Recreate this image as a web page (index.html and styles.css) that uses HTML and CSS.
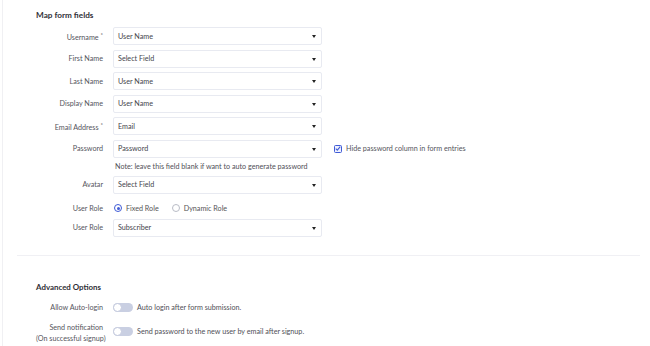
FILE: index.html
```html
<!DOCTYPE html>
<html lang="en">
  <head>
    <meta charset="UTF-8" />
    <title>Map form fields</title>
    <link rel="stylesheet" href="styles.css">
  </head>
  <body>
    <div class="panel">
      <div class="section">
        <div class="heading">Map form fields</div>
        <div class="rows">
          <div class="row">
            <div class="label">Username <span class="req">*</span></div>
            <div class="select">User Name</div>
          </div>
          <div class="row">
            <div class="label">First Name</div>
            <div class="select">Select Field</div>
          </div>
          <div class="row">
            <div class="label">Last Name</div>
            <div class="select">User Name</div>
          </div>
          <div class="row">
            <div class="label">Display Name</div>
            <div class="select">User Name</div>
          </div>
          <div class="row">
            <div class="label">Email Address <span class="req">*</span></div>
            <div class="select">Email</div>
          </div>
          <div class="row">
            <div class="label">Password</div>
            <div class="select">Password</div>
            <div class="check">
              <span class="box">
                <svg width="7" height="7" viewBox="0 0 8 8"><path d="M1 4.2 3.1 6.2 7 1.6" fill="none" stroke="#3f5bd6" stroke-width="1.4"/></svg>
              </span>
              <span>Hide password column in form entries</span>
            </div>
          </div>
          <div class="row note-row">
            <div class="label"></div>
            <div class="note">Note: leave this field blank if want to auto generate password</div>
          </div>
          <div class="row">
            <div class="label">Avatar</div>
            <div class="select">Select Field</div>
          </div>
          <div class="row radio-row">
            <div class="label">User Role</div>
            <div class="radios">
              <span class="radio on"></span><span class="radio-text">Fixed Role</span>
              <span class="radio"></span><span class="radio-text">Dynamic Role</span>
            </div>
          </div>
          <div class="row">
            <div class="label">User Role</div>
            <div class="select">Subscriber</div>
          </div>
        </div>
      </div>

      <div class="divider"></div>

      <div class="section advanced">
        <div class="heading">Advanced Options</div>
        <div class="toggles">
          <div class="row toggle-row">
            <div class="label">Allow Auto-login</div>
            <span class="toggle"></span>
            <span class="toggle-text">Auto login after form submission.</span>
          </div>
          <div class="row toggle-row tall">
            <div class="label">Send notification<br />(On successful signup)</div>
            <span class="toggle"></span>
            <span class="toggle-text">Send password to the new user by email after signup.</span>
          </div>
        </div>
      </div>
    </div>
  </body>
</html>
```

FILE: styles.css
```css
body {
  margin: 0;
  padding: 0;
  background: #fff;
  font-family: Lato, "Open Sans", sans-serif;
  font-size: 7.2px;
  color: #555;
}
.panel {
  margin-left: 2px;
  border-left: 1px solid #f0f0f3;
  height: 346px;
  overflow: hidden;
}
.section {
  padding-left: 33px;
}
.heading {
  font-size: 8.2px;
  font-weight: 700;
  color: #2f2f36;
  padding-top: 10px;
  height: 17px;
}
.rows {
  display: flex;
  flex-direction: column;
  gap: 4.5px;
}
.row {
  display: flex;
  align-items: center;
  height: 18px;
}
.label {
  width: 67px;
  flex-shrink: 0;
  margin-right: 10px;
  text-align: right;
  white-space: nowrap;
  color: #55555d;
  line-height: 11px;
}
.req {
  font-size: 6px;
  vertical-align: 3px;
  color: #444;
}
.select {
  width: 209px;
  height: 18px;
  box-sizing: border-box;
  border: 1px solid #e8eaf1;
  border-radius: 2px;
  padding-left: 4px;
  display: flex;
  align-items: center;
  color: #45454c;
  position: relative;
}
.select::after {
  content: "";
  position: absolute;
  right: 5px;
  top: 7px;
  border-left: 2.5px solid transparent;
  border-right: 2.5px solid transparent;
  border-top: 3px solid #222;
}
.check {
  display: flex;
  align-items: center;
  margin-left: 12px;
  color: #55555d;
}
.box {
  width: 8px;
  height: 8px;
  box-sizing: border-box;
  border: 1px solid #3f5bd6;
  border-radius: 1.5px;
  background: #eef1ff;
  margin-right: 4px;
  display: flex;
  align-items: center;
  justify-content: center;
}
.note-row {
  height: 14px;
  margin-top: -3px;
  margin-bottom: -2px;
}
.note {
  padding-left: 2px;
  color: #505057;
}
.radio-row {
  height: 14px;
  margin-top: 3px;
  margin-bottom: -1px;
}
.radios {
  display: flex;
  align-items: center;
  padding-left: 1px;
}
.radio {
  width: 8px;
  height: 8px;
  box-sizing: border-box;
  border: 1px solid #b9bcc6;
  border-radius: 50%;
  margin-right: 4px;
  position: relative;
}
.radio.on {
  border-color: #3f5bd6;
}
.radio.on::after {
  content: "";
  position: absolute;
  left: 1.5px;
  top: 1.5px;
  width: 3px;
  height: 3px;
  border-radius: 50%;
  background: #3f5bd6;
}
.radio-text {
  margin-right: 13px;
}
.divider {
  margin: 18px 10px 0 14px;
  border-top: 1px solid #f0f0f4;
}
.advanced .heading {
  font-size: 7.9px;
  padding-top: 26px;
  height: 14px;
}
.toggles {
  display: flex;
  flex-direction: column;
  gap: 9px;
  padding-top: 5px;
}
.toggle-row {
  height: 14px;
}
.toggle-row.tall {
  height: 24px;
  align-items: flex-start;
}
.toggle-row.tall .label {
  margin-top: -2px;
}
.toggle-row.tall .toggle {
  margin-top: 3px;
}
.toggle-row.tall .toggle-text {
  line-height: 11px;
  margin-top: 2px;
}
.toggle {
  width: 20px;
  height: 9px;
  flex-shrink: 0;
  border-radius: 5px;
  background: #c9cfe2;
  position: relative;
  margin-right: 4px;
}
.toggle::before {
  content: "";
  position: absolute;
  left: 0;
  top: 0;
  width: 9px;
  height: 9px;
  box-sizing: border-box;
  border-radius: 50%;
  background: #fff;
  border: 1px solid #c3c9dd;
}
.toggle-text {
  color: #505057;
}
```
